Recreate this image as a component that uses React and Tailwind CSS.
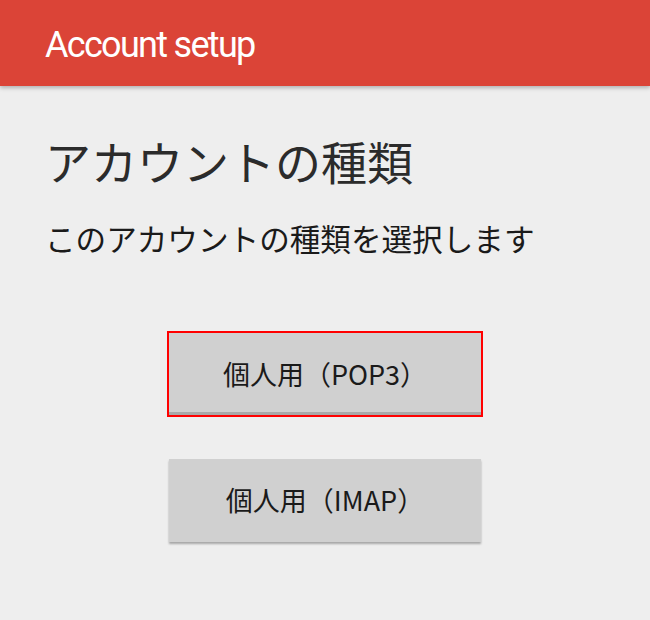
export default function App() {
  const jp = { fontFamily: '"Noto Sans CJK JP", "Noto Sans", sans-serif' };
  return (
    <div className="w-[650px] h-[620px] bg-[#eeeeee] overflow-hidden flex flex-col" style={jp}>
      <div className="h-[86px] bg-[#db4437] flex items-center pl-[45px] shadow-[0_2px_4px_rgba(0,0,0,0.25)] relative z-10">
        <span className="text-white text-[36px] leading-none tracking-[-1.7px] pt-[4px]" style={{ fontFamily: 'Roboto, "Noto Sans", sans-serif' }}>
          Account setup
        </span>
      </div>
      <div className="pl-[45px] pt-[46px]">
        <h1 className="text-[46px] leading-[56px] text-[#2b2b2b] font-normal">アカウントの種類</h1>
        <p className="mt-[30px] text-[30.6px] leading-[40px] text-[#1a1a1a]">このアカウントの種類を選択します</p>
      </div>
      <div className="flex flex-col items-center mt-[73px] gap-[42px]">
        <button className="w-[316px] h-[86px] border-2 border-[#ff0000] bg-[#d0d0d0] text-[27px] text-[#1a1a1a] shadow-[inset_0_-3px_0_#a8a8a8]">
          個人用（POP3）
        </button>
        <button className="w-[312px] h-[83px] bg-[#d0d0d0] text-[27px] text-[#1a1a1a] shadow-[0_2px_2px_rgba(0,0,0,0.3)]">
          個人用（IMAP）
        </button>
      </div>
    </div>
  );
}
